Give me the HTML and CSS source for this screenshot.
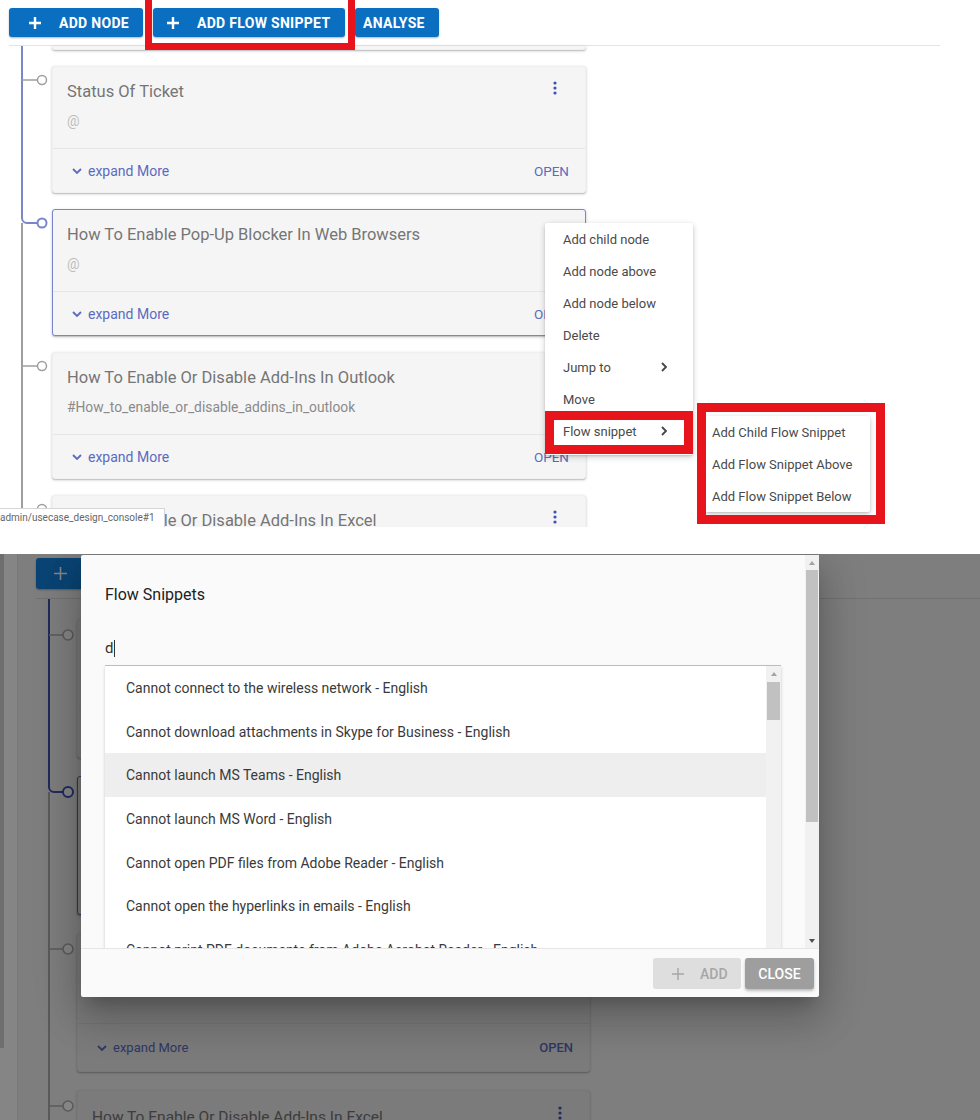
FILE: index.html
```html
<!DOCTYPE html>
<html lang="en">
<head>
    <meta charset="UTF-8">
    <meta name="viewport" content="width=device-width, initial-scale=1.0">
    <title>Usecase Design Console - Flow Snippets</title>
    <link rel="stylesheet" href="styles.css">
</head>
<body>

<!-- screenshot 1: node context menu -->
<div class="shot shot-top">
    <div class="toolbar">
        <button class="btn btn-node"><svg class="plus" width="12" height="12" viewBox="0 0 12 12"><path d="M6 0v12M0 6h12" stroke="#fff" stroke-width="2.4"/></svg>ADD NODE</button>
        <button class="btn btn-flow"><svg class="plus" width="12" height="12" viewBox="0 0 12 12"><path d="M6 0v12M0 6h12" stroke="#fff" stroke-width="2.4"/></svg>ADD FLOW SNIPPET</button>
        <button class="btn btn-analyse">ANALYSE</button>
    </div>

    <div class="tree">
        <div class="row">
            <div class="rail rail-blue"></div>
            <div class="card card-tail"></div>
        </div>
        <div class="row">
            <div class="rail rail-blue">
                <svg width="52" height="20"><path d="M22 14H37" stroke="#9e9e9e" stroke-width="1.5"/><circle cx="42" cy="14" r="4.5" fill="#fff" stroke="#9e9e9e" stroke-width="1.5"/></svg>
            </div>
            <div class="card">
                <div class="card-body">
                    <div class="card-head">
                        <div class="card-title">Status Of Ticket</div>
                        <svg class="kebab" width="4" height="14"><circle cx="2" cy="2" r="1.6"/><circle cx="2" cy="7" r="1.6"/><circle cx="2" cy="12" r="1.6"/></svg>
                    </div>
                    <div class="card-sub at">@</div>
                </div>
                <div class="card-foot">
                    <span class="expand"><svg width="10" height="6" viewBox="0 0 10 6"><path d="M1 1l4 4 4-4" fill="none" stroke="#5c6bc0" stroke-width="1.8"/></svg>expand More</span>
                    <span class="open">OPEN</span>
                </div>
            </div>
        </div>
        <div class="row">
            <div class="rail rail-split">
                <svg width="52" height="20"><path d="M22 0V9a5 5 0 0 0 5 5H37" fill="none" stroke="#7986cb" stroke-width="2"/><circle cx="42" cy="14" r="4.5" fill="#fff" stroke="#7986cb" stroke-width="2"/></svg>
            </div>
            <div class="card card-sel">
                <div class="card-body">
                    <div class="card-head">
                        <div class="card-title">How To Enable Pop-Up Blocker In Web Browsers</div>
                        <svg class="kebab" width="4" height="14"><circle cx="2" cy="2" r="1.6"/><circle cx="2" cy="7" r="1.6"/><circle cx="2" cy="12" r="1.6"/></svg>
                    </div>
                    <div class="card-sub at">@</div>
                </div>
                <div class="card-foot">
                    <span class="expand"><svg width="10" height="6" viewBox="0 0 10 6"><path d="M1 1l4 4 4-4" fill="none" stroke="#5c6bc0" stroke-width="1.8"/></svg>expand More</span>
                    <span class="open">OPEN</span>
                </div>
            </div>
        </div>
        <div class="row">
            <div class="rail">
                <svg width="52" height="20"><path d="M22 14H37" stroke="#9e9e9e" stroke-width="1.5"/><circle cx="42" cy="14" r="4.5" fill="#fff" stroke="#9e9e9e" stroke-width="1.5"/></svg>
            </div>
            <div class="card">
                <div class="card-body">
                    <div class="card-head">
                        <div class="card-title">How To Enable Or Disable Add-Ins In Outlook</div>
                        <svg class="kebab" width="4" height="14"><circle cx="2" cy="2" r="1.6"/><circle cx="2" cy="7" r="1.6"/><circle cx="2" cy="12" r="1.6"/></svg>
                    </div>
                    <div class="card-sub">#How_to_enable_or_disable_addins_in_outlook</div>
                </div>
                <div class="card-foot">
                    <span class="expand"><svg width="10" height="6" viewBox="0 0 10 6"><path d="M1 1l4 4 4-4" fill="none" stroke="#5c6bc0" stroke-width="1.8"/></svg>expand More</span>
                    <span class="open">OPEN</span>
                </div>
            </div>
        </div>
        <div class="row">
            <div class="rail">
                <svg width="52" height="20"><path d="M22 14H37" stroke="#9e9e9e" stroke-width="1.5"/><circle cx="42" cy="14" r="4.5" fill="#fff" stroke="#9e9e9e" stroke-width="1.5"/></svg>
            </div>
            <div class="card">
                <div class="card-body">
                    <div class="card-head">
                        <div class="card-title">How To Enable Or Disable Add-Ins In Excel</div>
                        <svg class="kebab" width="4" height="14"><circle cx="2" cy="2" r="1.6"/><circle cx="2" cy="7" r="1.6"/><circle cx="2" cy="12" r="1.6"/></svg>
                    </div>
                </div>
            </div>
        </div>
    </div>

    <div class="menu">
        <div class="menu-item">Add child node</div>
        <div class="menu-item">Add node above</div>
        <div class="menu-item">Add node below</div>
        <div class="menu-item">Delete</div>
        <div class="menu-item">Jump to <svg width="6" height="10" viewBox="0 0 6 10"><path d="M1 1l4 4-4 4" fill="none" stroke="#444" stroke-width="1.8"/></svg></div>
        <div class="menu-item">Move</div>
        <div class="menu-item">Flow snippet <svg width="6" height="10" viewBox="0 0 6 10"><path d="M1 1l4 4-4 4" fill="none" stroke="#444" stroke-width="1.8"/></svg></div>
    </div>
    <div class="submenu">
        <div class="menu-item">Add Child Flow Snippet</div>
        <div class="menu-item">Add Flow Snippet Above</div>
        <div class="menu-item">Add Flow Snippet Below</div>
    </div>

    <!-- red annotation frames -->
    <div class="mark mark-btn"></div>
    <div class="mark mark-item"></div>
    <div class="mark mark-sub"></div>

    <div class="status">admin/usecase_design_console#1</div>
</div>

<!-- screenshot 2: flow snippets dialog -->
<div class="shot shot-bottom">
    <div class="bpage">
        <div class="bside"><div class="bthumb"></div></div>
        <div class="bmain">
            <div class="toolbar toolbar-b">
                <button class="btn btn-b"><svg class="plus" width="13" height="13" viewBox="0 0 13 13"><path d="M6.5 0v13M0 6.5h13" stroke="#fff" stroke-width="1.6"/></svg>ADD NODE</button>
            </div>
            <div class="tree tree-b">
                <div class="row">
                    <div class="rail rail-blue"></div>
                    <div class="spacer"></div>
                </div>
                <div class="row">
                    <div class="rail rail-blue">
                        <svg width="41" height="22"><path d="M13 16H27" stroke="#adadad" stroke-width="1.5"/><circle cx="32" cy="16" r="5" fill="#fff" stroke="#adadad" stroke-width="1.6"/></svg>
                    </div>
                    <div class="card">
                        <div class="card-body">
                            <div class="card-head">
                                <div class="card-title">Status Of Ticket</div>
                                <svg class="kebab" width="4" height="14"><circle cx="2" cy="2" r="1.6"/><circle cx="2" cy="7" r="1.6"/><circle cx="2" cy="12" r="1.6"/></svg>
                            </div>
                            <div class="card-sub at">@</div>
                        </div>
                        <div class="card-foot">
                            <span class="expand"><svg width="10" height="6" viewBox="0 0 10 6"><path d="M1 1l4 4 4-4" fill="none" stroke="#5c6bc0" stroke-width="1.8"/></svg>expand More</span>
                            <span class="open">OPEN</span>
                        </div>
                    </div>
                </div>
                <div class="row">
                    <div class="rail rail-split">
                        <svg width="41" height="22"><path d="M13 0V11a5 5 0 0 0 5 5H27" fill="none" stroke="#3f51b5" stroke-width="2"/><circle cx="32" cy="16" r="5" fill="#fff" stroke="#3f51b5" stroke-width="2"/></svg>
                    </div>
                    <div class="card card-sel">
                        <div class="card-body">
                            <div class="card-head">
                                <div class="card-title">How To Enable Pop-Up Blocker In Web Browsers</div>
                                <svg class="kebab" width="4" height="14"><circle cx="2" cy="2" r="1.6"/><circle cx="2" cy="7" r="1.6"/><circle cx="2" cy="12" r="1.6"/></svg>
                            </div>
                            <div class="card-sub at">@</div>
                        </div>
                        <div class="card-foot">
                            <span class="expand"><svg width="10" height="6" viewBox="0 0 10 6"><path d="M1 1l4 4 4-4" fill="none" stroke="#5c6bc0" stroke-width="1.8"/></svg>expand More</span>
                            <span class="open">OPEN</span>
                        </div>
                    </div>
                </div>
                <div class="row">
                    <div class="rail">
                        <svg width="41" height="22"><path d="M13 16H27" stroke="#adadad" stroke-width="1.5"/><circle cx="32" cy="16" r="5" fill="#fff" stroke="#adadad" stroke-width="1.6"/></svg>
                    </div>
                    <div class="card">
                        <div class="card-body">
                            <div class="card-head">
                                <div class="card-title">How To Enable Or Disable Add-Ins In Outlook</div>
                                <svg class="kebab" width="4" height="14"><circle cx="2" cy="2" r="1.6"/><circle cx="2" cy="7" r="1.6"/><circle cx="2" cy="12" r="1.6"/></svg>
                            </div>
                            <div class="card-sub">#How_to_enable_or_disable_addins_in_outlook</div>
                        </div>
                        <div class="card-foot">
                            <span class="expand"><svg width="10" height="6" viewBox="0 0 10 6"><path d="M1 1l4 4 4-4" fill="none" stroke="#5c6bc0" stroke-width="1.8"/></svg>expand More</span>
                            <span class="open">OPEN</span>
                        </div>
                    </div>
                </div>
                <div class="row">
                    <div class="rail">
                        <svg width="41" height="22"><path d="M13 16H27" stroke="#adadad" stroke-width="1.5"/><circle cx="32" cy="16" r="5" fill="#fff" stroke="#adadad" stroke-width="1.6"/></svg>
                    </div>
                    <div class="card">
                        <div class="card-body">
                            <div class="card-head">
                                <div class="card-title">How To Enable Or Disable Add-Ins In Excel</div>
                                <svg class="kebab" width="4" height="14"><circle cx="2" cy="2" r="1.6"/><circle cx="2" cy="7" r="1.6"/><circle cx="2" cy="12" r="1.6"/></svg>
                            </div>
                        </div>
                    </div>
                </div>
            </div>
        </div>
    </div>

    <div class="overlay"></div>

    <div class="dialog">
        <div class="dlg-body">
            <div class="dlg-inner">
                <h2 class="dlg-title">Flow Snippets</h2>
                <div class="search">d<span class="caret"></span></div>
                <div class="list">
                    <div class="list-items">
                        <div class="list-item">Cannot connect to the wireless network - English</div>
                        <div class="list-item">Cannot download attachments in Skype for Business - English</div>
                        <div class="list-item hl">Cannot launch MS Teams - English</div>
                        <div class="list-item">Cannot launch MS Word - English</div>
                        <div class="list-item">Cannot open PDF files from Adobe Reader - English</div>
                        <div class="list-item">Cannot open the hyperlinks in emails - English</div>
                        <div class="list-item">Cannot print PDF documents from Adobe Acrobat Reader - English</div>
                    </div>
                    <div class="scrollbar scrollbar-list">
                        <div class="sb-arrow"><span class="tri-up"></span></div>
                        <div class="sb-thumb thumb-list"></div>
                    </div>
                </div>
            </div>
            <div class="scrollbar scrollbar-dlg">
                <div class="sb-arrow"><span class="tri-up"></span></div>
                <div class="sb-thumb thumb-dlg"></div>
                <div class="sb-fill"></div>
                <div class="sb-arrow"><span class="tri-down"></span></div>
            </div>
        </div>
        <div class="dlg-foot">
            <button class="fbtn fbtn-add"><svg width="12" height="12" viewBox="0 0 12 12"><path d="M6 0v12M0 6h12" stroke="#a6a6a6" stroke-width="1.4"/></svg>ADD</button>
            <button class="fbtn fbtn-close">CLOSE</button>
        </div>
    </div>
</div>

</body>
</html>
```

FILE: styles.css
```css
body {
    margin: 0;
    font-family: Roboto, "Liberation Sans", Arial, sans-serif;
    background: #fff;
    color: #333;
}
.shot {
    position: relative;
    overflow: hidden;
    width: 980px;
}
.shot-top {
    height: 527px;
}
.shot-bottom {
    height: 566px;
    margin-top: 27px;
}

/* toolbar */
.toolbar {
    display: flex;
    gap: 10px;
    margin-left: 9px;
    width: 931px;
    height: 29px;
    padding: 8px 0;
    border-bottom: 1px solid #e4e4e4;
}
.btn {
    display: flex;
    align-items: center;
    height: 29px;
    padding: 0;
    border: 0;
    border-radius: 3px;
    background: #0b6fc1;
    color: #fff;
    font-family: Roboto, "Liberation Sans", Arial, sans-serif;
    font-size: 14px;
    font-weight: 700;
    letter-spacing: 0.3px;
    box-shadow: 0 1px 2px rgba(0, 0, 0, 0.3);
}
.btn .plus {
    margin-right: 18px;
}
.btn-node {
    width: 134px;
    padding-left: 20px;
}
.btn-flow {
    width: 192px;
    padding-left: 14px;
}
.btn-analyse {
    width: 84px;
    padding-left: 8px;
}

/* tree */
.row {
    display: flex;
}
.rail {
    flex: none;
    width: 52px;
    background: linear-gradient(#9e9e9e, #9e9e9e) 21px 0 / 2px 100% no-repeat;
}
.rail-blue {
    background-image: linear-gradient(#7986cb, #7986cb);
}
.rail-split {
    background-position: 21px 14px;
}
.rail svg {
    display: block;
}
.card {
    display: flex;
    flex-direction: column;
    box-sizing: border-box;
    width: 534px;
    height: 127px;
    margin-bottom: 16px;
    background: #f5f5f5;
    border: 1px solid #f0f0f0;
    border-radius: 3px;
    box-shadow: 0 1px 3px rgba(0, 0, 0, 0.22), 0 1px 1px rgba(0, 0, 0, 0.1);
}
.card-tail {
    height: 4px;
    border-top: 0;
    border-radius: 0 0 3px 3px;
}
.card-sel {
    border-color: #7986cb;
}
.card-body {
    box-sizing: border-box;
    height: 81px;
    padding: 15px 28px 0 14px;
}
.card-head {
    display: flex;
    justify-content: space-between;
    align-items: flex-start;
}
.card-title {
    font-size: 16.5px;
    line-height: 20px;
    color: #757575;
    white-space: nowrap;
}
.kebab {
    flex: none;
    margin-top: -1px;
    fill: #3f51b5;
}
.card-sub {
    margin-top: 9px;
    font-size: 13.8px;
    line-height: 20px;
    color: #8a8a8a;
}
.card-sub.at {
    color: #bdbdbd;
    font-size: 14px;
}
.card-foot {
    display: flex;
    align-items: center;
    justify-content: space-between;
    height: 43px;
    padding: 0 16px 0 19px;
    border-top: 1px solid #e6e6e6;
}
.expand {
    display: flex;
    align-items: center;
    gap: 6px;
    color: #5c6bc0;
    font-size: 14px;
}
.open {
    color: #5c6bc0;
    font-size: 13.5px;
}

/* context menu */
.menu, .submenu {
    position: absolute;
    background: #fff;
    box-shadow: 0 2px 6px rgba(0, 0, 0, 0.2), 0 1px 2px rgba(0, 0, 0, 0.12);
    border-radius: 2px;
}
.menu {
    left: 545px;
    top: 223px;
    width: 148px;
    padding-bottom: 8px;
}
.submenu {
    left: 705px;
    top: 416px;
    width: 165px;
}
.menu-item {
    display: flex;
    align-items: center;
    justify-content: space-between;
    height: 32px;
    padding: 0 26px 0 18px;
    font-size: 13px;
    color: #4a4a4a;
    white-space: nowrap;
}
.submenu .menu-item {
    padding-left: 7px;
}
.mark {
    position: absolute;
    box-sizing: border-box;
    border: 9px solid #e8141c;
}
.mark-btn {
    left: 145px;
    top: -10px;
    width: 210px;
    height: 60px;
    border-width: 7px;
}
.mark-item {
    left: 545px;
    top: 411px;
    width: 148px;
    height: 43px;
}
.mark-sub {
    left: 697px;
    top: 403px;
    width: 188px;
    height: 121px;
}
.status {
    position: absolute;
    left: 0;
    bottom: 0;
    width: 165px;
    height: 19px;
    box-sizing: border-box;
    background: #fff;
    border: 1px solid #d6d6d6;
    border-left: 0;
    border-bottom: 0;
    font-size: 10px;
    line-height: 18px;
    color: #666;
    white-space: nowrap;
    overflow: hidden;
}

/* second screenshot: page under the dialog */
.bpage {
    display: flex;
    height: 100%;
    background: #f2f2f2;
}
.bside {
    flex: none;
    width: 18px;
    background: #fff;
    border-right: 1px solid #e6e6e6;
    box-sizing: border-box;
}
.bthumb {
    width: 4px;
    height: 494px;
    background: #d4d4d4;
}
.bmain {
    flex: 1;
    padding-left: 18px;
}
.toolbar-b {
    margin-left: 0;
    width: auto;
    height: 31px;
    padding: 4px 0 9px;
    border-bottom-color: #d8d8d8;
}
.btn-b {
    height: 31px;
    width: 134px;
    padding-left: 18px;
    background: #1483de;
}
.tree-b .rail {
    width: 41px;
    background-position: 12px 0;
    background-image: linear-gradient(#adadad, #adadad);
}
.tree-b .rail-blue {
    background-image: linear-gradient(#3f51b5, #3f51b5);
}
.tree-b .rail-split {
    background-position: 12px 16px;
}
.spacer {
    height: 20px;
}
.tree-b .card {
    width: 513px;
    height: 139px;
    margin-bottom: 18px;
    background: #ebebeb;
    border-color: #e6e6e6;
}
.tree-b .card-sel {
    border-color: #5c6bc0;
}
.tree-b .card-body {
    height: 89px;
    padding: 16px 27px 0 14px;
}
.tree-b .card-title {
    font-size: 15.5px;
}
.tree-b .card-foot {
    height: 47px;
    border-top-color: #dedede;
}
.tree-b .expand {
    font-size: 13px;
}
.tree-b .open {
    font-size: 13px;
    font-weight: 500;
}

.overlay {
    position: absolute;
    inset: 0;
    background: rgba(0, 0, 0, 0.48);
}

/* dialog */
.dialog {
    position: absolute;
    left: 81px;
    top: 1px;
    width: 738px;
    height: 442px;
    display: flex;
    flex-direction: column;
    background: #fafafa;
    border-radius: 2px;
    box-shadow: 0 11px 15px -7px rgba(0, 0, 0, 0.2), 0 24px 38px 3px rgba(0, 0, 0, 0.14), 0 9px 46px 8px rgba(0, 0, 0, 0.12);
}
.dlg-body {
    display: flex;
    height: 393px;
    overflow: hidden;
}
.dlg-inner {
    flex: 1;
    padding: 0 24px;
    overflow: hidden;
}
.dlg-title {
    margin: 30px 0 0;
    font-size: 16px;
    line-height: 20px;
    font-weight: 400;
    color: #212121;
}
.search {
    display: flex;
    align-items: center;
    height: 20px;
    margin-top: 33px;
    font-size: 15px;
    color: #333;
}
.caret {
    width: 1px;
    height: 17px;
    margin-left: 1px;
    background: #333;
}
.list {
    display: flex;
    height: 320px;
    margin-top: 8px;
    background: #fff;
    box-shadow: 0 -1px 0 #bdbdbd, 0 1px 3px rgba(0, 0, 0, 0.2);
}
.list-items {
    flex: 1;
}
.list-item {
    display: flex;
    align-items: center;
    height: 43.7px;
    padding-left: 21px;
    font-size: 14px;
    color: #3a3a3a;
    white-space: nowrap;
}
.list-item.hl {
    background: #eeeeee;
}
.scrollbar {
    flex: none;
    display: flex;
    flex-direction: column;
    background: #f1f1f1;
}
.scrollbar-list {
    width: 15px;
}
.scrollbar-dlg {
    width: 14px;
}
.sb-arrow {
    height: 15px;
    display: flex;
    align-items: center;
    justify-content: center;
}
.tri-up, .tri-down {
    width: 0;
    height: 0;
    border-left: 3.5px solid transparent;
    border-right: 3.5px solid transparent;
}
.tri-up {
    border-bottom: 4px solid #a3a3a3;
}
.tri-down {
    border-top: 4px solid #505050;
}
.sb-thumb {
    margin: 0 1px;
    background: #c1c1c1;
}
.thumb-list {
    height: 38px;
    margin-top: 1px;
}
.thumb-dlg {
    height: 252px;
}
.sb-fill {
    flex: 1;
}
.dlg-foot {
    display: flex;
    justify-content: flex-end;
    align-items: flex-start;
    gap: 4px;
    box-sizing: border-box;
    height: 49px;
    padding: 9px 5px 0 0;
    border-top: 1px solid #e6e6e6;
}
.fbtn {
    display: flex;
    align-items: center;
    height: 31px;
    border: 0;
    border-radius: 3px;
    font-family: Roboto, "Liberation Sans", Arial, sans-serif;
    font-size: 14px;
    font-weight: 500;
}
.fbtn-add {
    width: 88px;
    gap: 16px;
    padding-left: 19px;
    background: #dedede;
    color: #a6a6a6;
}
.fbtn-close {
    width: 69px;
    justify-content: center;
    background: #9e9e9e;
    color: #fff;
    box-shadow: 0 2px 3px rgba(0, 0, 0, 0.25);
}
```
